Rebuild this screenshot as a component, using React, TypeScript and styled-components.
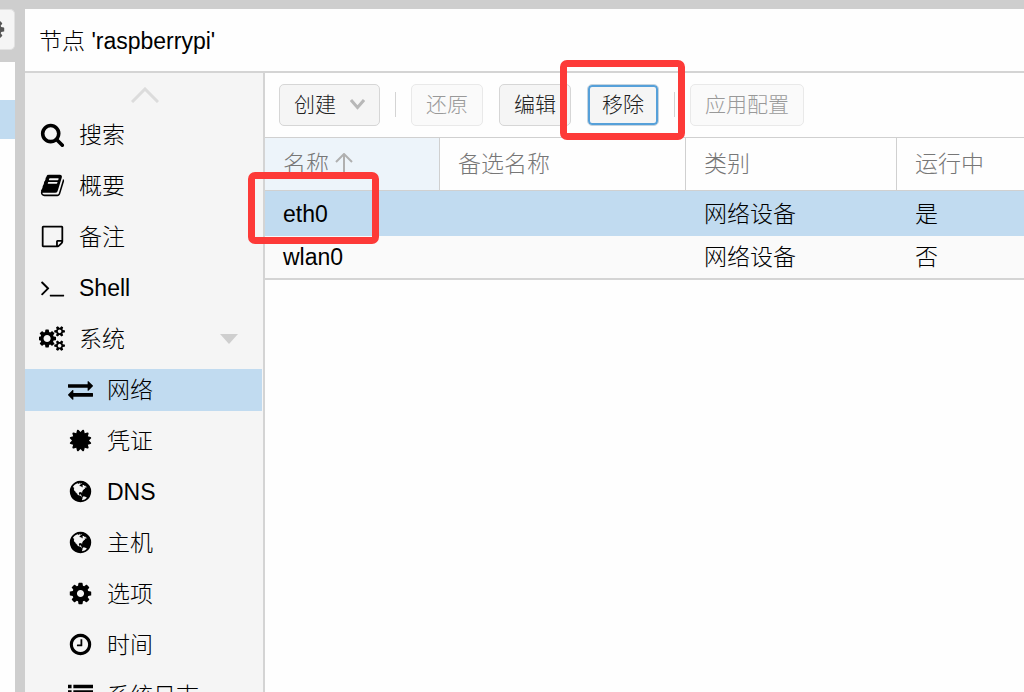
import React from 'react';
import styled, { createGlobalStyle, css } from 'styled-components';

const GlobalStyle = createGlobalStyle`
  *, *::before, *::after { box-sizing: border-box; }
  body {
    margin: 0;
    background: #cecece;
    color: #000;
    font-family: "Liberation Sans", "Noto Sans CJK SC", sans-serif;
    font-size: 23px;
    font-weight: 300;
    line-height: 28px;
  }
`;

const paths = {
  search:
    'M1216 832q0-185-131.5-316.5t-316.5-131.5-316.5 131.5-131.5 316.5 131.5 316.5 316.5 131.5 316.5-131.5 131.5-316.5zm512 832q0 52-38 90t-90 38q-54 0-90-38l-343-342q-179 124-399 124-143 0-273.5-55.5t-225-150-150-225-55.5-273.5 55.5-273.5 150-225 225-150 273.5-55.5 273.5 55.5 225 150 150 225 55.5 273.5q0 220-124 399l343 343q37 37 37 90z',
  book:
    'M1703 478q40 57 18 129l-275 906q-19 64-76.5 107.5t-122.5 43.5h-923q-77 0-148.5-53.5t-99.5-131.5q-24-67-2-127 0-4 3-27t4-37q1-8-3-21.5t-3-19.5q2-11 8-21t16.5-23.5 16.5-23.5q23-38 45-91.5t30-91.5q3-10 .5-30t-.5-28q3-11 17-28t17-23q21-36 42-92t25-90q1-9-2.5-32t.5-28q4-13 22-30.5t22-22.5q19-26 42.5-84.5t27.5-96.5q1-8-3-25.5t-2-26.5q2-8 9-18t18-23 17-21q8-12 16.5-30.5t15-35 16-36 19.5-32 26.5-23.5 36-11.5 47.5 5.5l-1 3q38-9 51-9h761q74 0 114 56t18 130l-274 906q-36 119-71.5 153.5t-128.5 34.5h-869q-27 0-38 15-11 16-1 43 24 70 144 70h923q29 0 56-15.5t35-41.5l300-987q7-22 5-57 38 15 59 43zm-1064 2q-4 13 2 22.5t20 9.5h608q13 0 25.5-9.5t16.5-22.5l21-64q4-13-2-22.5t-20-9.5h-608q-13 0-25.5 9.5t-16.5 22.5zm-83 256q-4 13 2 22.5t20 9.5h608q13 0 25.5-9.5t16.5-22.5l21-64q4-13-2-22.5t-20-9.5h-608q-13 0-25.5 9.5t-16.5 22.5z',
  note:
    'M1528 1280h-248v248q29-10 41-22l185-185q12-12 22-41zm-280-128h288v-896h-1280v1280h896v-288q0-40 28-68t68-28zm416-928v1024q0 40-20 88t-48 76l-184 184q-28 28-76 48t-88 20h-1024q-40 0-68-28t-28-68v-1344q0-40 28-68t68-28h1344q40 0 68 28t28 68z',
  terminal:
    'M649 983l-466 466q-10 10-23 10t-23-10l-50-50q-10-10-10-23t10-23l393-393-393-393q-10-10-10-23t10-23l50-50q10-10 23-10t23 10l466 466q10 10 10 23t-10 23zm1079 457v64q0 14-9 23t-23 9h-960q-14 0-23-9t-9-23v-64q0-14 9-23t23-9h960q14 0 23 9t9 23z',
  cogs:
    'M832 896q0-106-75-181t-181-75-181 75-75 181 75 181 181 75 181-75 75-181zm768 512q0-52-38-90t-90-38-90 38-38 90q0 53 37.5 90.5t90.5 37.5 90.5-37.5 37.5-90.5zm0-1024q0-52-38-90t-90-38-90 38-38 90q0 53 37.5 90.5t90.5 37.5 90.5-37.5 37.5-90.5zm-384 421v185q0 10-7 19.5t-16 10.5l-155 24q-11 35-32 76 34 48 90 115 7 11 7 20 0 12-7 19-23 30-82.5 89.5t-78.5 59.5q-11 0-21-7l-115-90q-37 19-77 31-11 108-23 155-7 24-30 24h-186q-11 0-20-7.5t-10-17.5l-23-153q-34-10-75-31l-118 89q-7 7-20 7-11 0-21-8-144-133-144-160 0-9 7-19 10-14 41-53t47-61q-23-44-35-82l-152-24q-10-1-17-9.5t-7-19.5v-185q0-10 7-19.5t16-10.5l155-24q11-35 32-76-34-48-90-115-7-11-7-20 0-12 7-20 22-30 82-89t79-59q11 0 21 7l115 90q34-18 77-32 11-108 23-154 7-24 30-24h186q11 0 20 7.5t10 17.5l23 153q34 10 75 31l118-89q8-7 20-7 11 0 21 8 144 133 144 160 0 8-7 19-12 16-42 54t-45 60q23 48 34 82l152 23q10 2 17 10.5t7 19.5zm640 533v140q0 16-149 31-12 27-30 52 51 113 51 138 0 4-4 7-122 71-124 71-8 0-46-47t-52-68q-20 2-30 2t-30-2q-14 21-52 68t-46 47q-2 0-124-71-4-3-4-7 0-25 51-138-18-25-30-52-149-15-149-31v-140q0-16 149-31 13-29 30-52-51-113-51-138 0-4 4-7 4-2 35-20t59-34 30-16q8 0 46 46.5t52 67.5q20-2 30-2t30 2q51-71 92-112l6-2q4 0 124 70 4 3 4 7 0 25-51 138 17 23 30 52 149 15 149 31zm0-1024v140q0 16-149 31-12 27-30 52 51 113 51 138 0 4-4 7-122 71-124 71-8 0-46-47t-52-68q-20 2-30 2t-30-2q-14 21-52 68t-46 47q-2 0-124-71-4-3-4-7 0-25 51-138-18-25-30-52-149-15-149-31v-140q0-16 149-31 13-29 30-52-51-113-51-138 0-4 4-7 4-2 35-20t59-34 30-16q8 0 46 46.5t52 67.5q20-2 30-2t30 2q51-71 92-112l6-2q4 0 124 70 4 3 4 7 0 25-51 138 17 23 30 52 149 15 149 31z',
  exchange:
    'M1792 1184v192q0 13-9.5 22.5t-22.5 9.5h-1376v192q0 13-9.5 22.5t-22.5 9.5q-12 0-24-10l-319-320q-9-9-9-22 0-14 9-23l320-320q9-9 23-9 13 0 22.5 9.5t9.5 22.5v192h1376q13 0 22.5 9.5t9.5 22.5zm0-544q0 14-9 23l-320 320q-9 9-23 9-13 0-22.5-9.5t-9.5-22.5v-192h-1376q-13 0-22.5-9.5t-9.5-22.5v-192q0-13 9.5-22.5t22.5-9.5h1376v-192q0-14 9-23t23-9q12 0 24 10l319 319q9 9 9 23z',
  certificate:
    'M1504 896l138 135q30 28 20 70-12 41-52 51l-188 48 53 186q12 41-19 70-29 31-70 19l-186-53-48 188q-10 40-51 52-12 2-19 2-31 0-51-22l-135-138-135 138q-28 30-70 20-41-11-51-52l-48-188-186 53q-41 12-70-19-31-29-19-70l53-186-188-48q-40-10-52-51-10-42 20-70l138-135-138-135q-30-28-20-70 12-41 52-51l188-48-53-186q-12-41 19-70 29-31 70-19l186 53 48-188q10-41 51-51 41-12 70 19l135 139 135-139q29-30 70-19 41 10 51 51l48 188 186-53q41-12 70 19 31 29 19 70l-53 186 188 48q40 10 52 51 10 42-20 70z',
  globe:
    'M896 128q209 0 385.5 103t279.5 279.5 103 385.5-103 385.5-279.5 279.5-385.5 103-385.5-103-279.5-279.5-103-385.5 103-385.5 279.5-279.5 385.5-103zm274 521q-2 1-9.5 9.5t-13.5 9.5q2 0 4.5-5t5-11 3.5-7q6-7 22-15 14-6 52-12 34-8 51 11-2-2 9.5-13t14.5-12q3-2 15-4.5t15-7.5l2-22q-12 1-17.5-7t-6.5-21q0 2-6 8 0-7-4.5-8t-11.5 1-9 1q-10-3-15-7.5t-8-16.5-4-15q-2-5-9.5-11t-9.5-10q-1-2-2.5-5.5t-3-6.5-4-5.5-5.5-2.5-7 5-7.5 10-4.5 5q-3-2-6-1.500t-4.500 1-4.500 3-5 3.500q-3 2-8.500 3t-8.500 2q15-5-1-11-10-4-16-3 9-4 7.500-12t-8.500-14h5q-1-4-8.500-8.500t-17.500-8.500-13-6q-8-5-34-9.500t-33-.5q-5 6-4.500 10.500t4 14 3.500 12.500q1 6-5.500 13t-6.500 12q0 7 14 15.500t10 21.500q-3 8-16 16t-16 12q-5 8-1.500 18.500t10.500 16.500q2 2 1.500 4t-3.500 4.500-5.500 4-6.500 3.500l-3 2q-11 5-20.500-6t-13.500-26q-7-25-16-30-23-8-29 1-5-13-41-26-25-9-58-4 6-1 0-15-7-15-19-12 3-6 4-17.500t1-13.500q3-13 12-23 1-1 7-8.500t9.500-13.500.5-6q35 4 50-11 5-5 11.500-17t10.500-17q9-6 14-5.500t14.500 5.500 14.500 5q14 1 15.500-11t-7.500-20q12 1 3-17-4-7-8-9-12-4-27 5-8 4 2 8-1-1-9.500 10.500t-16.500 17.500-16-5q-1-1-5.500-13.500t-9.500-13.500q-8 0-16 15 3-8-11-15t-24-8q19-12-8-27-7-4-20.500-5t-19.500 4q-5 7-5.500 11.500t5 8 10.500 5.500 11.500 4 8.500 3q14 10 8 14-2 1-8.500 3.500t-11.500 4.500-6 4q-3 4 0 14t-2 14q-5-5-9-17.500t-7-16.500q7 9-25 6l-10-1q-4 0-16 2t-20.500 1-13.500-8q-4-8 0-20 1-4 4-2-4-3-11-9.500t-10-8.500q-46 15-94 41 6 1 12-1 5-2 13-6.500t10-5.500q34-14 42-7l5-5q14 16 20 25-7-4-30-1-20 6-22 12 7 12 5 18-4-3-11.500-10t-14.500-11-15-5q-16 0-22 1-146 80-235 222 7 7 12 8 4 1 5 9t2.500 11 11.500-3q9 8 3 19 1-1 44 27 19 17 21 21 3 11-10 18-1-2-9-9t-9-4q-3 5 .5 18.500t10.500 12.500q-7 0-9.500 16t-2.500 35.500-1 23.500l2 1q-3 12 5.500 34.500t21.500 19.500q-13 3 20 43 6 8 8 9 3 2 12 7.500t15 10 10 10.500q4 5 10 22.500t14 23.500q-2 6 9.500 20t10.500 23q-1 0-2.500 1t-2.500 1q3 7 15.500 14t15.500 13q1 3 2 10t3 11 8 2q2-20-24-62-15-25-17-29-3-5-5.500-15.500t-4.500-14.500q2 0 6 1.500t8.500 3.500 7.500 4 2 3q-3 7 2 17.500t12 18.500 17 19 12 13q6 6 14 19.500t0 13.500q9 0 20 10.500t17 19.500q5 8 8 26t5 24q2 7 8.500 13.500t12.500 9.500l16 8 13 7q5 2 18.500 10.500t21.500 11.500q10 4 16 4t14.500-2.500 13.500-3.500q15-2 29 15t21 21q36 19 55 11-2 1 .5 7.500t8 15.500 9 14.500 5.500 8.500q5 6 18 15t18 15q6-4 7-9-3 8 7 20t18 10q14-3 14-32-31 15-49-18 0-1-2.500-5.500t-4-8.500-2.500-8.500 0-7.500 5-3q9 0 10-3.500t-2-12.500-4-13q-1-8-11-20t-12-15q-5 9-16 8t-16-9q0 1-1.500 5.500t-1.500 6.500q-13 0-15-1 1-3 2.500-17.500t3.500-22.500q1-4 5.500-12t7.500-14.500 4-12.500-4.500-9.500-17.500-2.500q-19 1-26 20-1 3-3 10.500t-5 11.500-9 7q-7 3-24 2t-24-5q-13-8-22.500-29t-9.500-37q0-10 2.500-26.500t3-25-5.500-24.500q3-2 9-9.500t10-10.500q2-1 4.500-1.500t4.500 0 4-1.500 3-6q-1-1-4-3-3-3-4-3 7 3 28.500-1.500t27.500 1.500q15 11 22-2 0-1-2.500-9.500t-.5-13.500q5 27 29 9 3 3 15.500 5t17.500 5q3 2 7 5.500t5.500 4.500 5-.5 8.500-6.500q10 14 12 24 11 40 19 44 7 3 11 2t4.500-9.500 0-14-1.500-12.500l-1-8v-18l-1-8q-15-3-18.500-12t1.500-18.500 15-18.500q1-1 8-3.500t15.500-6.500 12.500-8q21-19 15-35 7 0 11-9-1 0-5-3t-7.500-5-4.500-2q9-5 2-16 5-3 7.500-11t7.500-10q9 12 21 2 8-8 1-16 5-7 20.500-10.500t18.500-9.500q7 2 8-2t1-12 3-12q4-5 15-9t13-5l17-11q3-4 0-4 18 2 31-11 10-11-6-20 3-6-3-9.500t-15-5.500q3-1 11.500-.5t10.500-1.500q15-10-7-16-17-5-43 12zm-163 877q206-36 351-189-3-3-12.500-4.500t-12.500-3.500q-18-7-24-8 1-7-2.500-13t-8-9-12.500-8-11-7q-2-2-7-6t-7-5.500-7.500-4.500-8.500-2-10 1l-3 1q-3 1-5.500 2.500t-5.500 3-4 3 0 2.500q-21-17-36-22-5-1-11-5.500t-10.500-7-10-1.500-11.500 7q-5 5-6 15t-2 13q-7-5 0-17.500t2-18.500q-3-6-10.500-4.500t-12 4.500-11.500 8.500-9 6.500-8.500 5.500-8.500 7.500q-3 4-6 12t-5 11q-2-4-11.500-6.500t-9.500-5.500q2 10 4 35t5 38q7 31-12 48-27 25-29 40-4 22 12 26 0 7-8 20.500t-7 21.500q0 6 2 16z',
  cog:
    'M1152 896q0-106-75-181t-181-75-181 75-75 181 75 181 181 75 181-75 75-181zm512-109v222q0 12-8 23t-20 13l-185 28q-19 54-39 91 35 50 107 138 10 12 10 25t-9 23q-27 37-99 108t-94 71q-12 0-26-9l-138-108q-44 23-91 38-16 136-29 186-7 28-36 28h-222q-14 0-24.5-8.5t-11.5-21.5l-28-184q-49-16-90-37l-141 107q-10 9-25 9-14 0-25-11-126-114-165-168-7-10-7-23 0-12 8-23 15-21 51-66.5t54-70.5q-27-50-41-99l-183-27q-13-2-21-12.5t-8-23.5v-222q0-12 8-23t19-13l186-28q14-46 39-92-40-57-107-138-10-12-10-24 0-10 9-23 26-36 98.5-107.5t94.5-71.5q13 0 26 10l138 107q44-23 91-38 16-136 29-186 7-28 36-28h222q14 0 24.5 8.5t11.5 21.5l28 184q49 16 90 37l142-107q9-9 24-9 13 0 25 10 129 119 165 170 7 8 7 22 0 12-8 23-15 21-51 66.5t-54 70.5q26 50 41 98l183 28q13 2 21 12.5t8 23.5z',
  clock:
    'M1024 544v448q0 14-9 23t-23 9h-320q-14 0-23-9t-9-23v-64q0-14 9-23t23-9h224v-352q0-14 9-23t23-9h64q14 0 23 9t9 23zm416 352q0-148-73-273t-198-198-273-73-273 73-198 198-73 273 73 273 198 198 273 73 273-73 198-198 73-273zm224 0q0 209-103 385.5t-279.5 279.5-385.5 103-385.5-103-279.5-279.5-103-385.5 103-385.5 279.5-279.5 385.5-103 385.5 103 279.5 279.5 103 385.5z',
  list:
    'M0 128h256v256h-256zM384 128h1408v256h-1408zM0 512h256v256h-256zM384 512h1408v256h-1408zM0 896h256v256h-256zM384 896h1408v256h-1408zM0 1280h256v256h-256zM384 1280h1408v256h-1408z',
};

type IconName = keyof typeof paths;

const Glyph = styled.svg<{ $wide?: boolean }>`
  display: block;
  flex: none;
  width: ${(p) => (p.$wide ? 26 : 25)}px;
  height: 25px;
  fill: currentColor;
`;

function Icon({ name }: { name: IconName }) {
  const wide = name === 'cogs';
  return (
    <Glyph $wide={wide} viewBox={wide ? '0 0 1856 1792' : '0 0 1792 1792'} aria-hidden="true">
      <path d={paths[name]} />
    </Glyph>
  );
}

const Shell = styled.div`
  display: flex;
  gap: 10px;
  height: 100vh;
  overflow: hidden;
  padding-top: 9px;
`;

const TreeEdge = styled.aside`
  display: flex;
  flex-direction: column;
  flex: none;
  width: 15px;
  overflow: hidden;
`;

const GearButton = styled.button`
  display: flex;
  align-items: center;
  justify-content: flex-end;
  flex: none;
  height: 41px;
  margin: 0 0 12px;
  padding: 0 8px 0 0;
  border: 1px solid #e2e2e2;
  border-left: 0;
  border-radius: 0 5px 5px 0;
  background: #f5f5f5;
  color: #555;
`;

const Tree = styled.div`
  flex: 1;
  padding-top: 38px;
  background: #fefefe;
`;

const TreeSelection = styled.div`
  height: 39px;
  background: #c1dbf0;
`;

const Panel = styled.main`
  display: flex;
  flex-direction: column;
  flex: 1;
  min-width: 0;
  background: #fefefe;
`;

const Title = styled.h1`
  flex: none;
  margin: 0;
  padding: 18px 14px 16px;
  border-bottom: 2px solid #d4d4d4;
  font-size: 23px;
  font-weight: 300;
  line-height: 28px;
`;

const Body = styled.div`
  display: flex;
  flex: 1;
  min-height: 0;
`;

const Sidebar = styled.nav`
  flex: none;
  width: 240px;
  padding-right: 1px;
  overflow: hidden;
  border-right: 2px solid #d4d4d4;
  background: #f5f5f5;
`;

const ScrollUp = styled.button`
  display: flex;
  align-items: center;
  justify-content: center;
  width: 100%;
  height: 41px;
  padding: 3px 0 0 2px;
  border: 0;
  background: none;
  color: #dcdcdc;
`;

const Menu = styled.ul`
  display: flex;
  flex-direction: column;
  gap: 9px;
  margin: 0;
  padding: 0;
  list-style: none;
`;

const MenuLink = styled.a<{ $nested?: boolean; $active?: boolean }>`
  display: flex;
  align-items: center;
  gap: 14px;
  height: 42px;
  padding: 0 24px 0 ${(p) => (p.$nested ? 42 : 14)}px;
  background: ${(p) => (p.$active ? '#c1dbf0' : 'transparent')};
  color: #000;
  text-decoration: none;
`;

const IconSlot = styled.span`
  display: flex;
  justify-content: center;
  width: 26px;
  padding-bottom: 1px;
`;

const MenuLabel = styled.span`
  flex: 1;
  white-space: nowrap;
`;

const Content = styled.section`
  flex: 1;
  min-width: 0;
`;

const Toolbar = styled.div`
  display: flex;
  align-items: center;
  gap: 16px;
  height: 64px;
  padding: 0 14px 1px;
`;

const ToolButton = styled.button<{ $focused?: boolean }>`
  display: flex;
  align-items: center;
  gap: 14px;
  flex: none;
  height: 42px;
  padding: 0 14px;
  border: 1px solid #d6d6d6;
  border-radius: 5px;
  background: #f5f5f5;
  color: #222;
  font: inherit;
  font-size: 21px;
  line-height: 28px;

  &:disabled {
    border-color: #e9e9e9;
    background: #fafafa;
    color: #999;
  }

  ${(p) =>
    p.$focused &&
    css`
      border-color: #c6d4df;
      box-shadow: inset 0 0 0 2px #56a0d9;
    `}
`;

const Divider = styled.span`
  flex: none;
  width: 1px;
  height: 25px;
  margin: 0 -1px;
  background: #d4d4d4;
`;

const Marked = styled.span`
  position: relative;
  display: block;
`;

const Highlight = styled.span<{ $box: string }>`
  position: absolute;
  z-index: 1;
  inset: ${(p) => p.$box};
  border: 7px solid #fd3a38;
  border-radius: 7px;
  pointer-events: none;
`;

const Grid = styled.table`
  width: 100%;
  border-collapse: separate;
  border-spacing: 0;
  table-layout: fixed;
`;

const HeadCell = styled.th<{ $width?: number; $sorted?: boolean }>`
  width: ${(p) => (p.$width ? `${p.$width}px` : 'auto')};
  height: 54px;
  padding: 0 18px 1px;
  border: solid #d0d0d0;
  border-width: 1px 1px 1px 0;
  background: ${(p) => (p.$sorted ? '#edf4fa' : '#fefefe')};
  color: #777;
  font-weight: 300;
  text-align: left;
  white-space: nowrap;

  &:last-child {
    border-right: 0;
  }
`;

const HeadLabel = styled.span`
  display: flex;
  align-items: center;
  gap: 6px;
`;

const Row = styled.tr<{ $selected?: boolean }>`
  background: ${(p) => (p.$selected ? '#c1dbf0' : '#fafafa')};
`;

const Cell = styled.td<{ $last?: boolean }>`
  position: relative;
  height: ${(p) => (p.$last ? 44 : 45)}px;
  padding: 0 18px;
  border-bottom: ${(p) => (p.$last ? '2px solid #d4d4d4' : '0')};
  white-space: nowrap;
`;

const menu: { icon: IconName; label: string; nested?: boolean; active?: boolean; parent?: boolean }[] = [
  { icon: 'search', label: '搜索' },
  { icon: 'book', label: '概要' },
  { icon: 'note', label: '备注' },
  { icon: 'terminal', label: 'Shell' },
  { icon: 'cogs', label: '系统', parent: true },
  { icon: 'exchange', label: '网络', nested: true, active: true },
  { icon: 'certificate', label: '凭证', nested: true },
  { icon: 'globe', label: 'DNS', nested: true },
  { icon: 'globe', label: '主机', nested: true },
  { icon: 'cog', label: '选项', nested: true },
  { icon: 'clock', label: '时间', nested: true },
  { icon: 'list', label: '系统日志', nested: true },
];

const devices = [
  { name: 'eth0', alt: '', type: '网络设备', active: '是' },
  { name: 'wlan0', alt: '', type: '网络设备', active: '否' },
];

export default function App() {
  return (
    <>
      <GlobalStyle />
      <Shell>
        <TreeEdge>
          <GearButton aria-label="设置">
            <Icon name="cog" />
          </GearButton>
          <Tree>
            <TreeSelection />
          </Tree>
        </TreeEdge>
        <Panel>
          <Title>节点 'raspberrypi'</Title>
          <Body>
            <Sidebar>
              <ScrollUp aria-label="向上滚动">
                <svg width="28" height="16" viewBox="0 0 28 16" fill="none" stroke="currentColor" strokeWidth="3">
                  <path d="M1 15L14 2l13 13" />
                </svg>
              </ScrollUp>
              <Menu>
                {menu.map((item) => (
                  <li key={item.label}>
                    <MenuLink
                      href="#"
                      $nested={item.nested}
                      $active={item.active}
                      aria-current={item.active ? 'page' : undefined}
                    >
                      <IconSlot>
                        <Icon name={item.icon} />
                      </IconSlot>
                      <MenuLabel>{item.label}</MenuLabel>
                      {item.parent && (
                        <svg width="18" height="10" viewBox="0 0 18 10" fill="#cfcfcf" aria-hidden="true">
                          <path d="M0 0h18L9 10z" />
                        </svg>
                      )}
                    </MenuLink>
                  </li>
                ))}
              </Menu>
            </Sidebar>
            <Content>
              <Toolbar>
                <ToolButton>
                  创建
                  <svg width="15" height="11" viewBox="0 0 15 11" fill="none" stroke="#b8b8b8" strokeWidth="3" aria-hidden="true">
                    <path d="M1 1l6.500 7.500L14 1" />
                  </svg>
                </ToolButton>
                <Divider />
                <ToolButton disabled>还原</ToolButton>
                <ToolButton>编辑</ToolButton>
                <Marked>
                  <ToolButton $focused>移除</ToolButton>
                  <Highlight $box="-24px -26px -14px -27px" />
                </Marked>
                <Divider />
                <ToolButton disabled>应用配置</ToolButton>
              </Toolbar>
              <Grid>
                <thead>
                  <tr>
                    <HeadCell $width={175} $sorted aria-sort="ascending">
                      <HeadLabel>
                        名称
                        <svg width="18" height="22" viewBox="0 0 18 22" fill="none" stroke="#b0b0b0" strokeWidth="2" aria-hidden="true">
                          <path d="M1 9l8-8 8 8M9 1v21" />
                        </svg>
                      </HeadLabel>
                    </HeadCell>
                    <HeadCell $width={246}>备选名称</HeadCell>
                    <HeadCell $width={211}>类别</HeadCell>
                    <HeadCell>运行中</HeadCell>
                  </tr>
                </thead>
                <tbody>
                  {devices.map((device, index) => {
                    const last = index === devices.length - 1;
                    return (
                      <Row key={device.name} $selected={index === 0}>
                        <Cell $last={last}>
                          {device.name}
                          {index === 0 && <Highlight $box="-19px 61px -8px -17px" />}
                        </Cell>
                        <Cell $last={last}>{device.alt}</Cell>
                        <Cell $last={last}>{device.type}</Cell>
                        <Cell $last={last}>{device.active}</Cell>
                      </Row>
                    );
                  })}
                </tbody>
              </Grid>
            </Content>
          </Body>
        </Panel>
      </Shell>
    </>
  );
}
